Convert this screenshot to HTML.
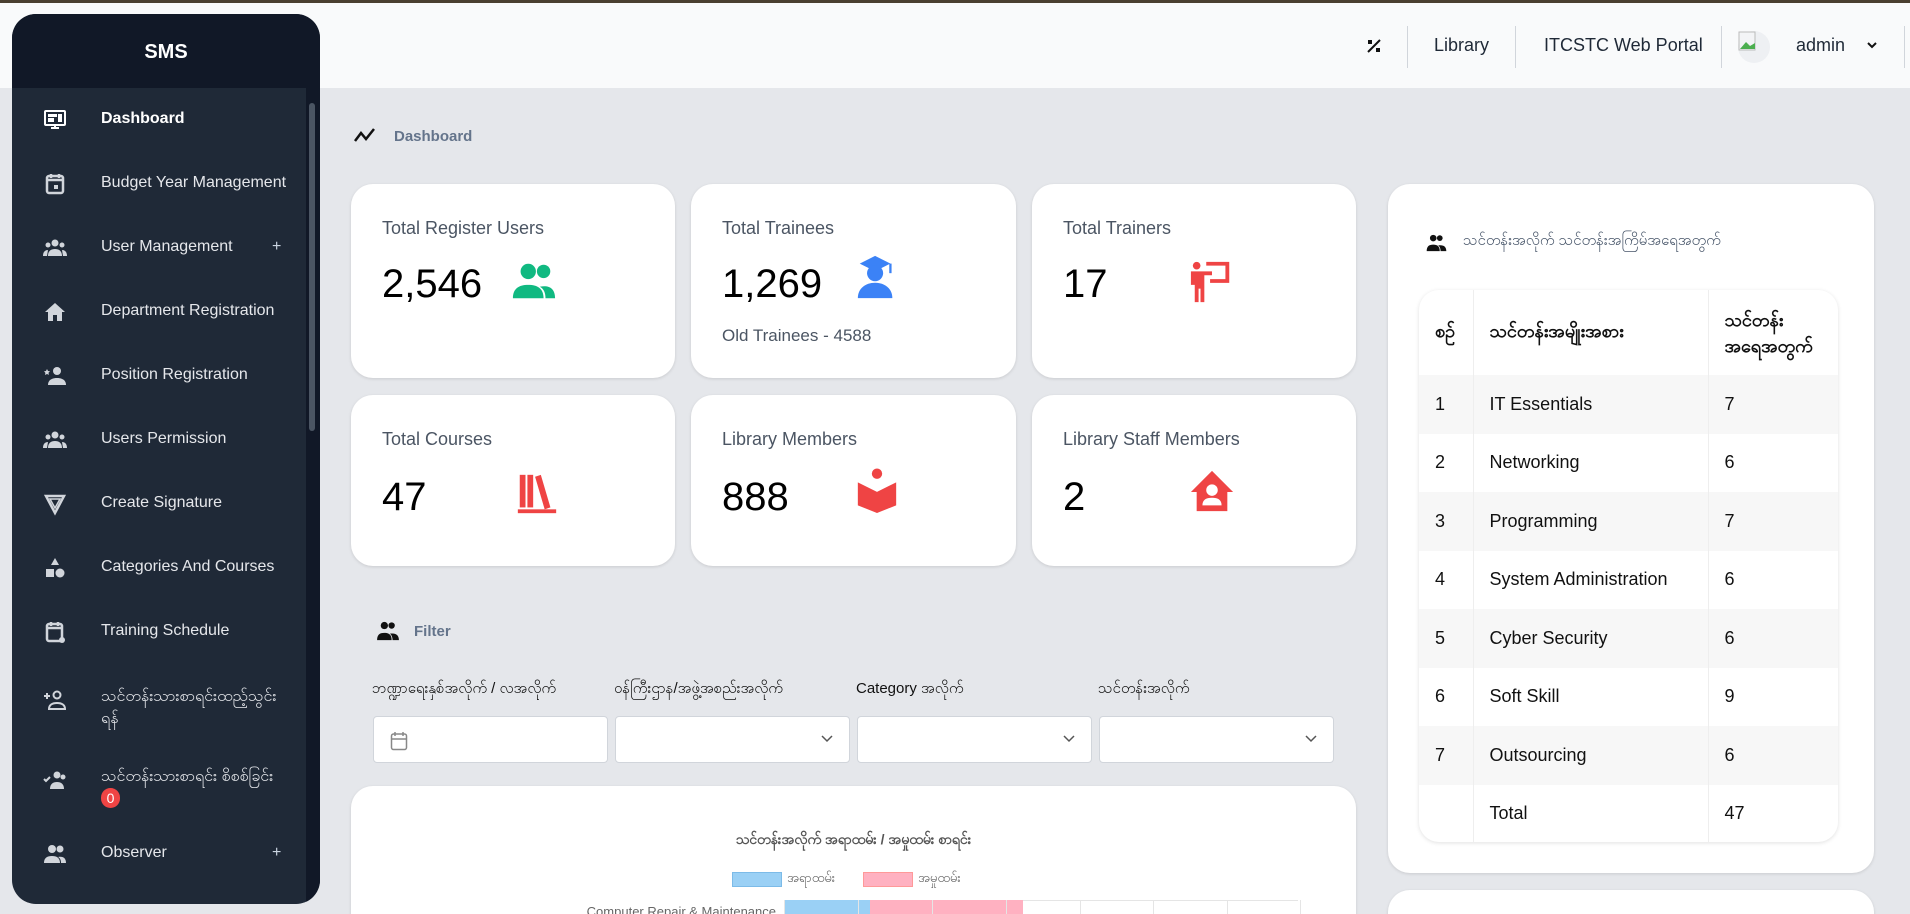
<!DOCTYPE html>
<html><head><meta charset="utf-8">
<style>
*{box-sizing:border-box;margin:0;padding:0}
html,body{width:1910px;height:914px;overflow:hidden}
body{background:#e5e7eb;font-family:"Liberation Sans","Noto Sans CJK SC",sans-serif}
#w{position:relative;width:1910px;height:914px;overflow:hidden;background:#e5e7eb}
.abs{position:absolute}
.top{left:0;top:0;width:1910px;height:88px;background:#f9fafb;border-top:3px solid #4a3f30}
.sb{left:12px;top:14px;width:308px;height:890px;background:#1f2937;border-radius:24px;overflow:hidden}
.sbh{left:0;top:0;width:308px;height:74px;background:#111827;color:#fff;font-weight:bold;font-size:20px;text-align:center;line-height:76px}
.mi{left:0;width:300px;color:#e5e7eb;font-size:16px}
.mi .ic{position:absolute;left:31px;top:-12px;width:24px;height:24px}
.mi .tx{position:absolute;left:89px;top:-10px;white-space:nowrap}
.mi .pl{position:absolute;left:260px;top:-10px;color:#cbd5e1}
.card{background:#fff;border-radius:22px;box-shadow:0 1px 3px rgba(0,0,0,.12)}
.ct{position:absolute;left:31px;font-size:18px;color:#4b5563}
.cn{position:absolute;left:31px;font-size:40px;color:#000}
.ci{position:absolute;left:160px;width:46px;height:46px}
.lbl{font-size:15px;color:#111}
.inp{background:#fff;border:1px solid #d1d5db;border-radius:4px;height:47px;top:716px}
.chev{position:absolute;right:16px;top:17px}
table{border-collapse:collapse;width:100%;font-size:18px;color:#111}
td,th{padding:0 0 0 16px;text-align:left;height:58.5px}
th{font-weight:bold;height:85px}
td+td,th+th{border-left:1px solid #eee}
tr:nth-child(even) td{background:#f7f7f7}
.tn{font-size:18px;color:#1f2937}
</style></head><body><div id="w">
<div class="abs top"></div>
<svg class="abs" style="left:1364px;top:36px" width="20" height="20" viewBox="0 0 20 20"><path d="M4 16L16 4M5 5h2v2H5zM13 13h2v2h-2z" stroke="#111" stroke-width="2" fill="none"/></svg>
<div class="abs" style="left:1407px;top:26px;width:1px;height:42px;background:#d1d5db"></div>
<div class="abs tn" style="left:1434px;top:35px">Library</div>
<div class="abs" style="left:1515px;top:26px;width:1px;height:42px;background:#d1d5db"></div>
<div class="abs tn" style="left:1544px;top:35px">ITCSTC Web Portal</div>
<div class="abs" style="left:1721px;top:26px;width:1px;height:42px;background:#d1d5db"></div>
<div class="abs" style="left:1738px;top:31px;width:32px;height:32px;border-radius:50%;background:#eef0f3"></div>
<svg class="abs" style="left:1738px;top:31px" width="20" height="22"><rect x="1" y="1" width="16" height="18" fill="#f3f4f6" stroke="#bbb"/><path d="M2 18l6-7 4 4 5-3v6z" fill="#4caf50"/></svg>
<div class="abs tn" style="left:1796px;top:35px">admin</div>
<svg class="abs" style="left:1866px;top:40px" width="12" height="10"><path d="M2 3l4 4 4-4" stroke="#111" stroke-width="2" fill="none"/></svg>
<div class="abs" style="left:1904px;top:26px;width:1px;height:42px;background:#d1d5db"></div>

<div class="abs sb">
<div class="abs sbh">SMS</div>
<div class="abs" style="left:294px;top:74px;width:14px;height:816px;background:#111827"></div>
<div class="abs" style="left:297px;top:89px;width:6px;height:328px;background:#4b5563;border-radius:3px"></div>
<div class="abs mi" style="top:106px"><svg class="ic" viewBox="0 0 24 24"><rect x="2" y="3" width="20" height="14" rx="1" fill="none" stroke="#fff" stroke-width="2"/><rect x="5" y="6" width="9" height="3" fill="#fff"/><rect x="5" y="10" width="6" height="4" fill="#fff"/><rect x="15" y="6" width="4" height="8" fill="#fff"/><path d="M8 20h8M12 17v3" stroke="#fff" stroke-width="2"/></svg><span class="tx" style="font-weight:bold;color:#fff">Dashboard</span></div>
<div class="abs mi" style="top:170px"><svg class="ic" viewBox="0 0 24 24"><rect x="4" y="4" width="16" height="17" rx="2" fill="none" stroke="#d1d5db" stroke-width="2.5"/><path d="M4 8h16M8 2v4M16 2v4" stroke="#d1d5db" stroke-width="2.5"/><rect x="11" y="13" width="4" height="4" fill="#d1d5db"/></svg><span class="tx">Budget Year Management</span></div>
<div class="abs mi" style="top:234px"><svg class="ic" viewBox="0 0 24 24" fill="#d1d5db"><circle cx="12" cy="7" r="3.5"/><circle cx="5" cy="9" r="2.5"/><circle cx="19" cy="9" r="2.5"/><path d="M5 20c0-5 3-7 7-7s7 2 7 7zM0 20c0-4 2-6 5-6l-1 6zM24 20c0-4-2-6-5-6l1 6z"/></svg><span class="tx">User Management</span><span class="pl">+</span></div>
<div class="abs mi" style="top:298px"><svg class="ic" viewBox="0 0 24 24" fill="#d1d5db"><path d="M12 3L2 12h3v9h5v-6h4v6h5v-9h3z"/></svg><span class="tx">Department Registration</span></div>
<div class="abs mi" style="top:362px"><svg class="ic" viewBox="0 0 24 24" fill="#d1d5db"><circle cx="14" cy="7" r="4"/><path d="M5 21c0-5 4-7 9-7s9 2 9 7z"/><path d="M4 5l1 2 2 .3-1.5 1.4.4 2.2L4 10l-2 1 .4-2.1L1 7.3 3 7z"/></svg><span class="tx">Position Registration</span></div>
<div class="abs mi" style="top:426px"><svg class="ic" viewBox="0 0 24 24" fill="#d1d5db"><circle cx="12" cy="7" r="3.5"/><circle cx="5" cy="9" r="2.5"/><circle cx="19" cy="9" r="2.5"/><path d="M5 20c0-5 3-7 7-7s7 2 7 7zM0 20c0-4 2-6 5-6l-1 6zM24 20c0-4-2-6-5-6l1 6z"/></svg><span class="tx">Users Permission</span></div>
<div class="abs mi" style="top:490px"><svg class="ic" viewBox="0 0 24 24"><path d="M3 4h18L12 21z" fill="none" stroke="#d1d5db" stroke-width="2.5"/><path d="M7 7h10l-5 9z" fill="none" stroke="#d1d5db" stroke-width="1.5"/></svg><span class="tx">Create Signature</span></div>
<div class="abs mi" style="top:554px"><svg class="ic" viewBox="0 0 24 24" fill="#d1d5db"><path d="M12 2l4 7H8z"/><rect x="3" y="13" width="8" height="8"/><circle cx="17" cy="17" r="4.5"/></svg><span class="tx">Categories And Courses</span></div>
<div class="abs mi" style="top:618px"><svg class="ic" viewBox="0 0 24 24"><rect x="4" y="4" width="15" height="17" rx="2" fill="none" stroke="#d1d5db" stroke-width="2.5"/><path d="M4 8h15M8 2v4M15 2v4" stroke="#d1d5db" stroke-width="2.5"/><circle cx="19" cy="20" r="3" fill="#d1d5db"/></svg><span class="tx">Training Schedule</span></div>
<div class="abs mi" style="top:686px"><svg class="ic" viewBox="0 0 24 24" fill="none" stroke="#d1d5db" stroke-width="2"><circle cx="14" cy="7" r="3.5"/><path d="M6 21c0-4 3-6 8-6s8 2 8 6zM1 8h6M4 5v6"/></svg><span class="tx" style="top:-14px;line-height:22px">သင်တန်းသားစာရင်းထည့်သွင်း<br>ရန်</span></div>
<div class="abs mi" style="top:766px"><svg class="ic" viewBox="0 0 24 24" fill="#d1d5db"><circle cx="14" cy="7" r="3.5"/><circle cx="20" cy="9" r="2.5"/><path d="M7 21c0-5 3-7 7-7s7 2 7 7z"/><path d="M1 11l2 2 4-4" stroke="#d1d5db" stroke-width="2" fill="none"/></svg><span class="tx" style="top:-14px;line-height:22px">သင်တန်းသားစာရင်း စိစစ်ခြင်း</span><span style="position:absolute;left:89px;top:8px;width:19px;height:20px;border-radius:10px;background:#ef4444;color:#fff;font-size:14px;text-align:center;line-height:20px">0</span></div>
<div class="abs mi" style="top:840px"><svg class="ic" viewBox="0 0 24 24" fill="#d1d5db"><circle cx="9" cy="7" r="4"/><circle cx="17" cy="7" r="3.5"/><path d="M1 21c0-5 3-7 8-7s8 2 8 7zM18 21c0-3-1-5-3-6 5-1 8 1 8 6z"/></svg><span class="tx">Observer</span><span class="pl">+</span></div>
</div>

<svg class="abs" style="left:354px;top:127px" width="22" height="16"><path d="M1 14l6-8 5 6 8-10" stroke="#111" stroke-width="2.5" fill="none"/></svg>
<div class="abs" style="left:394px;top:128px;font-size:15px;font-weight:bold;color:#64748b">Dashboard</div>

<div class="abs card" style="left:351px;top:184px;width:324px;height:194px">
<div class="ct" style="top:34px">Total Register Users</div><div class="cn" style="top:78px">2,546</div>
<svg class="ci" style="top:74px;left:160px" viewBox="0 0 24 24" fill="#10b981"><circle cx="9" cy="7" r="4"/><circle cx="17" cy="7" r="3.5"/><path d="M1 21c0-5 3-7 8-7s8 2 8 7zM18 21c0-3-1-5-3-6 5-1 8 1 8 6z"/></svg></div>
<div class="abs card" style="left:691px;top:184px;width:325px;height:194px">
<div class="ct" style="top:34px">Total Trainees</div><div class="cn" style="top:78px">1,269</div>
<svg class="ci" style="top:70px;left:163px" viewBox="0 0 24 24" fill="#3b82f6"><path d="M11 1l8 4-8 4-8-4z"/><path d="M19 5v5" stroke="#3b82f6" stroke-width="1.2"/><circle cx="11" cy="10" r="4.2"/><path d="M2 23c0-5 4-8 9-8s9 3 9 8z"/></svg>
<div class="ct" style="top:142px;font-size:17px">Old Trainees - 4588</div></div>
<div class="abs card" style="left:1032px;top:184px;width:324px;height:194px">
<div class="ct" style="top:34px">Total Trainers</div><div class="cn" style="top:78px">17</div>
<svg class="ci" style="top:74px;left:157px" width="48" height="48" viewBox="0 0 24 24" fill="#ef4444"><circle cx="4" cy="4" r="2"/><path d="M1 7h6l5 0v2H8v14H6v-7H5v7H3v-9H1z"/><path d="M9 2h12v11H11v-2h8V4H9z"/></svg></div>
<div class="abs card" style="left:351px;top:395px;width:324px;height:171px">
<div class="ct" style="top:34px">Total Courses</div><div class="cn" style="top:80px">47</div>
<svg class="ci" style="top:76px;left:163px" viewBox="0 0 24 24" fill="#ef4444"><rect x="3" y="2" width="3" height="17"/><rect x="7" y="2" width="3" height="17"/><path d="M11 3l3-1 5 17-3 1z"/><rect x="2" y="20" width="20" height="2"/></svg></div>
<div class="abs card" style="left:691px;top:395px;width:325px;height:171px">
<div class="ct" style="top:34px">Library Members</div><div class="cn" style="top:80px">888</div>
<svg class="ci" style="top:72px;left:163px" viewBox="0 0 24 24" fill="#ef4444"><circle cx="12" cy="3.5" r="2.7"/><path d="M2 8l10 5 10-5v12l-10 4-10-4z"/></svg></div>
<div class="abs card" style="left:1032px;top:395px;width:324px;height:171px">
<div class="ct" style="top:34px">Library Staff Members</div><div class="cn" style="top:80px">2</div>
<svg class="ci" style="top:74px;left:157px" viewBox="0 0 24 24" fill="#ef4444"><path d="M12 1L1 12h3v10h16V12h3z"/><circle cx="12" cy="11" r="3" fill="#fff"/><path d="M7 19c0-3 2-4 5-4s5 1 5 4z" fill="#fff"/></svg></div>

<svg class="abs" style="left:377px;top:621px" width="22" height="20" viewBox="0 0 24 22" fill="#111"><circle cx="8" cy="5" r="4"/><circle cx="16" cy="5" r="3.5"/><path d="M0 21c0-6 3-8 8-8s8 2 8 8zM17 21c0-3-1-6-3-7 6-1 10 1 10 7z"/></svg>
<div class="abs" style="left:414px;top:623px;font-size:15px;font-weight:bold;color:#64748b">Filter</div>
<div class="abs lbl" style="left:372px;top:679px">ဘဏ္ဍာရေးနှစ်အလိုက် / လအလိုက်</div>
<div class="abs lbl" style="left:614px;top:679px">ဝန်ကြီးဌာန/အဖွဲ့အစည်းအလိုက်</div>
<div class="abs lbl" style="left:856px;top:679px">Category အလိုက်</div>
<div class="abs lbl" style="left:1098px;top:679px">သင်တန်းအလိုက်</div>
<div class="abs inp" style="left:373px;width:235px"><svg style="position:absolute;left:16px;top:14px" width="18" height="20" viewBox="0 0 18 20"><rect x="1.5" y="3" width="15" height="15.5" rx="2" fill="none" stroke="#888" stroke-width="1.5"/><path d="M1.5 8h15M5 1v4M13 1v4" stroke="#888" stroke-width="1.5"/></svg></div>
<div class="abs inp" style="left:615px;width:235px"><svg class="chev" width="12" height="10"><path d="M1 2l5 5 5-5" stroke="#555" stroke-width="1.5" fill="none"/></svg></div>
<div class="abs inp" style="left:857px;width:235px"><svg class="chev" width="12" height="10"><path d="M1 2l5 5 5-5" stroke="#555" stroke-width="1.5" fill="none"/></svg></div>
<div class="abs inp" style="left:1099px;width:235px"><svg class="chev" width="12" height="10"><path d="M1 2l5 5 5-5" stroke="#555" stroke-width="1.5" fill="none"/></svg></div>

<div class="abs card" style="left:351px;top:786px;width:1005px;height:200px">
<div class="abs" style="left:0;width:1005px;top:44px;text-align:center;font-size:14px;font-weight:bold;color:#555">သင်တန်းအလိုက် အရာထမ်း / အမှုထမ်း စာရင်း</div>
<div class="abs" style="left:381px;top:86px;width:50px;height:15px;background:#9ad0f5;border:1px solid #7cbbe8"></div>
<div class="abs" style="left:436px;top:84px;font-size:13px;color:#666">အရာထမ်း</div>
<div class="abs" style="left:512px;top:86px;width:50px;height:15px;background:#ffb1c1;border:1px solid #f99"></div>
<div class="abs" style="left:567px;top:84px;font-size:13px;color:#666">အမှုထမ်း</div>
<div class="abs" style="left:433px;top:114px;width:514px;height:1px;background:#e5e5e5"></div>
<div class="abs" style="left:433px;top:114px;width:86px;height:20px;background:#9ad0f5"></div>
<div class="abs" style="left:519px;top:114px;width:153px;height:20px;background:#ffb1c1"></div>
<div class="abs" style="left:433px;top:114px;width:1px;height:30px;background:#e5e5e5"></div>
<div class="abs" style="left:507px;top:114px;width:1px;height:30px;background:#e5e5e5"></div>
<div class="abs" style="left:581px;top:114px;width:1px;height:30px;background:#e5e5e5"></div>
<div class="abs" style="left:655px;top:114px;width:1px;height:30px;background:#e5e5e5"></div>
<div class="abs" style="left:729px;top:114px;width:1px;height:30px;background:#e5e5e5"></div>
<div class="abs" style="left:802px;top:114px;width:1px;height:30px;background:#e5e5e5"></div>
<div class="abs" style="left:876px;top:114px;width:1px;height:30px;background:#e5e5e5"></div>
<div class="abs" style="left:949px;top:114px;width:1px;height:30px;background:#e5e5e5"></div>
<div class="abs" style="left:180px;top:118px;width:245px;text-align:right;font-size:13px;color:#666">Computer Repair &amp; Maintenance</div>
</div>

<div class="abs card" style="left:1388px;top:184px;width:486px;height:689px">
<svg class="abs" style="left:38px;top:50px" width="21" height="18" viewBox="0 0 24 22" fill="#111"><circle cx="8" cy="5" r="4"/><circle cx="16" cy="5" r="3.5"/><path d="M0 21c0-6 3-8 8-8s8 2 8 8zM17 21c0-3-1-6-3-7 6-1 10 1 10 7z"/></svg>
<div class="abs" style="left:75px;top:47px;font-size:15px;color:#475569">သင်တန်းအလိုက် သင်တန်းအကြိမ်အရေအတွက်</div>
<div class="abs card" style="left:31px;top:106px;width:419px;height:552px;border-radius:20px;overflow:hidden;box-shadow:0 1px 4px rgba(0,0,0,.12)">
<table>
<tr><th style="width:54px">စဉ်</th><th style="width:235px">သင်တန်းအမျိုးအစား</th><th style="line-height:26px">သင်တန်း<br>အရေအတွက်</th></tr>
<tr><td>1</td><td>IT Essentials</td><td>7</td></tr>
<tr><td>2</td><td>Networking</td><td>6</td></tr>
<tr><td>3</td><td>Programming</td><td>7</td></tr>
<tr><td>4</td><td>System Administration</td><td>6</td></tr>
<tr><td>5</td><td>Cyber Security</td><td>6</td></tr>
<tr><td>6</td><td>Soft Skill</td><td>9</td></tr>
<tr><td>7</td><td>Outsourcing</td><td>6</td></tr>
<tr><td></td><td>Total</td><td>47</td></tr>
</table>
</div>
</div>
<div class="abs card" style="left:1388px;top:890px;width:486px;height:100px"></div>
</div></body></html>
